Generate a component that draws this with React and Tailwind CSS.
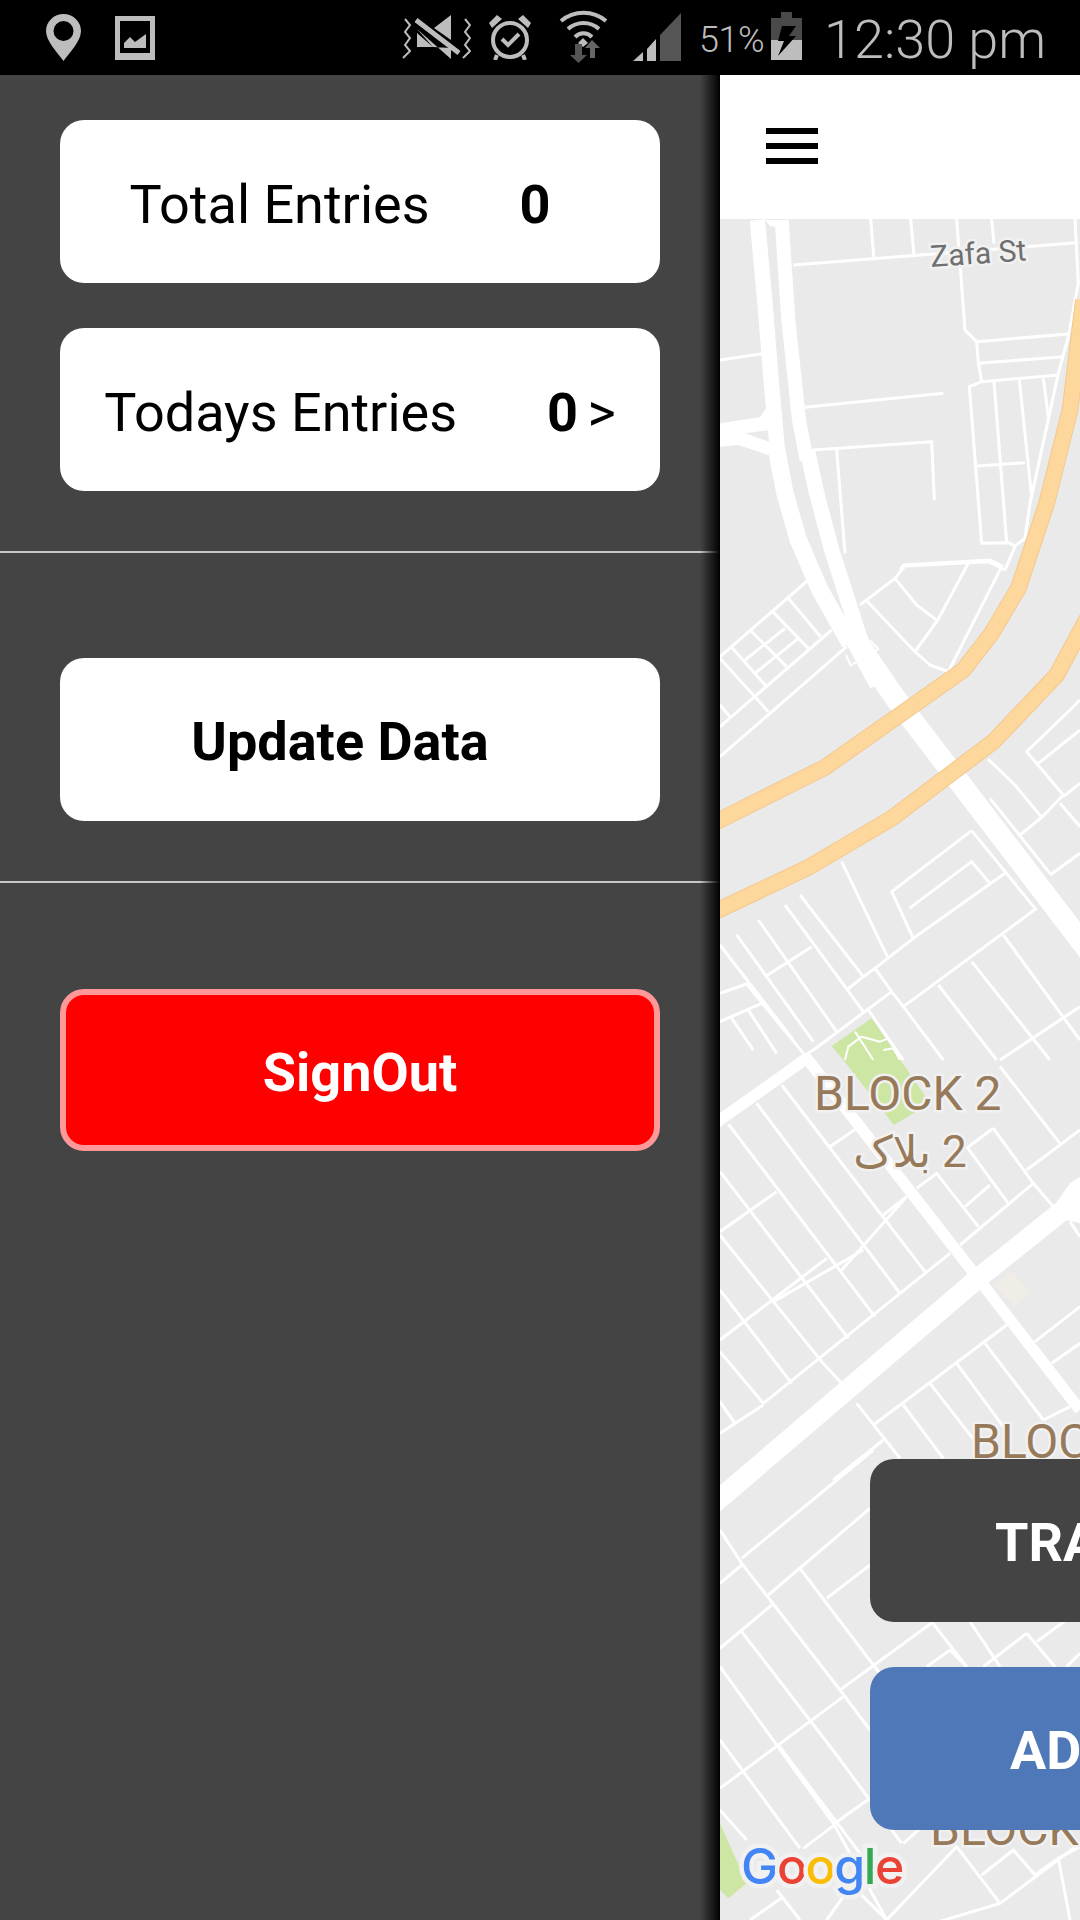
import { Fragment } from 'react';

// map strokes are traced per crop, each crop has its own origin and is 3x
const thinTop = [
  'M512 447L522 570', 'M632 447L642 555', 'M770 447L795 780L830 815L835 880L845 935L808 950L845 1420L925 1418L945 1428L975 1405L990 1300L1075 910',
  'M280 585L1130 518', 'M875 447L882 520', 'M1125 447L1135 640L1105 800L1075 910', 'M830 815L1105 792', 'M835 880L1090 860',
  'M845 935L1075 915', 'M882 935L920 1418', 'M958 930L995 1280', 'M1030 925L1045 1040', 'M832 1188L975 1178', 'M315 1012L730 970',
  'M60 870L195 850', 'M340 1140L695 1115L703 1290', 'M410 1140L435 1450', 'M600 1500L610 1485L870 1470L910 1490', 'M945 1430L915 1500',
];

const thinMid = [
  'M60 290L325 60', 'M60 500L395 210', 'M60 590L440 260', 'M480 135L585 55L615 18L865 5L915 30', 'M585 55L650 135L712 182',
  'M500 122L645 275L690 315L745 335L905 20', 'M712 182L645 275', 'M805 10L712 182', 'M95 262L200 380', 'M150 210L260 320',
  'M218 155L325 265', 'M265 115L362 230', 'M135 300L255 205', 'M165 340L295 235', 'M60 295L205 455', 'M60 435L90 470',
  'M1140 420L1110 450L980 575L1090 705', 'M1015 610L1140 510', 'M1090 705L1025 772L960 825', 'M1080 730L1140 800', 'M1140 670L1090 710',
  'M865 598L945 675L1025 772', 'M870 715L1050 940', 'M1050 945L1140 880', 'M425 905L562 1190', 'M815 812L575 995L640 1135', 'M815 812L1005 1045',
  'M628 1045L815 905L868 968', 'M915 940L640 1135L525 1225L490 1250L440 1290', 'M1010 1045L610 1340', 'M300 1005L490 1250', 'M255 1035L490 1355',
  'M175 1080L410 1415', 'M110 1125L340 1445', 'M335 1160L195 1250', 'M525 1225L575 1295L610 1340L730 1500', 'M575 1295L340 1470L290 1500',
  'M60 1155L280 1440', 'M60 1300L140 1272L310 1480', 'M60 1385L185 1330', 'M145 1350L230 1480', 'M95 1375L160 1470', 'M715 1275L890 1500',
  'M815 1205L1050 1500', 'M910 1125L1140 1440', 'M1140 1340L900 1500', 'M505 1350L610 1500',
];

const thinLow = [
  'M85 222L525 800', 'M170 160L600 730', 'M245 105L675 665', 'M60 365L445 865', 'M60 555L365 935L430 1005', 'M60 720L275 1000', 'M60 905L190 1060',
  'M60 1055L105 1120', 'M60 545L230 425', 'M60 870L380 625', 'M190 1060L600 730L750 610', 'M60 1150L190 1065', 'M220 755L490 600', 'M425 660L620 440',
  'M390 290L470 235', 'M550 495L620 440', 'M650 415L710 370L835 530', 'M780 585L1000 400L1060 470', 'M795 470L870 405', 'M880 235L805 290',
  'M800 290L925 460', 'M980 360L1140 240', 'M900 50L1080 280', 'M1000 400L880 235', 'M1005 875L1140 770', 'M1055 940L1140 880', 'M1110 515L1140 560',
  'M470 1060L600 1225', 'M520 1125L920 825', 'M610 1065L730 1225', 'M690 1000L830 1180', 'M770 940L910 1130', 'M855 880L1030 1110', 'M1030 1110L1110 1070',
  'M400 1290L550 1170',
];

const thinBottom = [
  'M60 240L125 340L420 720L510 840', 'M125 325L520 0', 'M60 400L125 345', 'M205 435L510 175', 'M300 355L520 645L610 760', 'M380 445L510 345', 'M420 720L700 515',
  'M60 595L215 465', 'M125 545L410 915L605 1180', 'M60 650L400 1120L560 1410', 'M60 870L300 1195', 'M60 1015L430 740', 'M60 1080L140 1170', 'M235 885L510 1250',
  'M405 1120L510 1045', 'M310 1195L410 1120', 'M610 1180L700 1100', 'M560 1410L770 1190L900 1360L1140 1180', 'M845 1275L940 1200L1005 1275L1075 1225L1140 1190',
  'M1075 1225L1110 1410', 'M900 1360L700 1420', 'M680 650L750 600L800 650', 'M695 515L800 650', 'M810 515L900 650', 'M850 650L980 550', 'M980 550L1065 650',
  'M1010 575L1140 480', 'M1100 650L1140 610', 'M380 1410L430 1340', 'M150 1410L250 1340', 'M230 1320L300 1410', 'M480 1330L560 1410',
];

const Crop = ({ x = 700, y, children }) => (
  <g transform={`translate(${x} ${y}) scale(0.33333)`} fill="none" strokeLinejoin="round">
    {children}
  </g>
);

const Lines = ({ list, width = 9 }) => (
  <Fragment>
    {list.map((d) => (
      <path key={d} d={d} stroke="#fff" strokeWidth={width} />
    ))}
  </Fragment>
);

const Highway = ({ d }) => (
  <Fragment>
    <path d={d} stroke="#f3c88f" strokeWidth="50" />
    <path d={d} stroke="#fdd79c" strokeWidth="44" />
  </Fragment>
);

const Map = () => (
  <svg className="block w-full h-full" viewBox="720 219 360 1701">
    <rect x="720" y="219" width="360" height="1701" fill="#eaeaea" />
    <Crop y={560}>
      <path d="M395 1458L515 1375L690 1630L582 1695L430 1500Z" fill="#cde6a3" />
      <path d="M435 1500L445 1460L485 1430L540 1445L565 1435M550 1470L580 1465L600 1500M465 1415L520 1500" stroke="#fff" strokeWidth="6" />
    </Crop>
    <Crop y={1450}>
      <path d="M60 1120L140 1300L85 1345L60 1320Z" fill="#cde6a3" />
    </Crop>
    <Crop y={1050}>
      <path d="M880 705L935 665L990 725L945 770Z" fill="#f0ece6" />
    </Crop>
    <Crop y={70}>
      <Lines list={thinTop} />
      <path d="M60 1060L180 1042L205 1005L240 1100L205 1155L115 1125L60 1130Z" fill="#fff" />
      <path d="M135 1090L210 1080L215 1118Z" fill="#eaeaea" />
    </Crop>
    <Crop x={720} y={220}>
      <path d="M112 0L135 250L155 500L175 720" stroke="#fff" strokeWidth="46" />
      <path d="M185 0L205 300L237 600L260 720" stroke="#fff" strokeWidth="42" />
      <path d="M135 0H205L165 20L150 18Z" fill="#fff" />
    </Crop>
    <Crop x={720} y={450}>
      <path d="M170 0L195 130L235 270L300 420L390 580" stroke="#fff" strokeWidth="52" />
      <path d="M262 0L290 130L335 300L380 440L425 580" stroke="#fff" strokeWidth="46" />
      <path d="M395 540L480 700" stroke="#fff" strokeWidth="66" />
      <path d="M378 615L392 646L475 597L450 572" stroke="#fff" strokeWidth="6" />
    </Crop>
    <Crop y={560}>
      <Lines list={thinMid} />
      <path d="M480 260L590 420L1200 1218" stroke="#fff" strokeWidth="64" />
    </Crop>
    <Crop y={1050}>
      <Lines list={thinLow} />
      <path d="M0 253L60 210L320 25L830 680L1140 1080" stroke="#fff" strokeWidth="34" />
      <path d="M0 1396L840 680L1200 392" stroke="#fff" strokeWidth="60" />
      <path d="M1060 470L1110 400L1140 380V520L1100 510Z" fill="#fff" />
    </Crop>
    <Crop y={1450}>
      <Lines list={thinBottom} />
    </Crop>
    <Crop y={560}>
      <Highway d="M0 810L375 622L620 450L790 330L875 220L955 85L1040 -170L1110 -450L1150 -780" />
      <Highway d="M0 1076L320 925L575 775L880 545L1070 345L1180 140" />
    </Crop>

    <g fill="#977a5a" stroke="#f1f1f1" strokeWidth="5" paintOrder="stroke" fontSize="48">
      <text x="814" y="1110">BLOCK 2</text>
      <text x="910" y="1167" textAnchor="middle" direction="rtl" className="font-['Roboto','DejaVu_Sans',sans-serif]" fontSize="44">2 بلاک</text>
      <text x="971" y="1458">BLOCK</text>
      <text x="930" y="1845">BLOCK</text>
    </g>
    <text x="931" y="267" transform="rotate(-4 931 267)" fill="#6f6f6f" stroke="#f1f1f1" strokeWidth="5" paintOrder="stroke" fontSize="30">Zafa St</text>

    <text x="741" y="1884" stroke="#f1f1f1" strokeWidth="9" paintOrder="stroke" fontSize="50" letterSpacing="-1.5" fontWeight="500" className="font-['Inter',sans-serif]">
      <tspan fill="#4285f4">G</tspan>
      <tspan fill="#ea4335">o</tspan>
      <tspan fill="#fbbc05">o</tspan>
      <tspan fill="#4285f4">g</tspan>
      <tspan fill="#34a853">l</tspan>
      <tspan fill="#ea4335">e</tspan>
    </text>
  </svg>
);

const StatusBar = () => (
  <div className="flex items-start h-[75px] bg-black text-[#bdbdbd] shrink-0">
    <svg className="ml-[46px] mt-[14px]" width="35" height="47" viewBox="0 0 35 47">
      <path fillRule="evenodd" fill="#bdbdbd" d="M17.5 0C27 0 35 7.500 35 17C35 27 24 38 17.500 47C11 38 0 27 0 17C0 7.500 8 0 17.500 0ZM17.500 7A10 10 0 1 0 17.500 27A10 10 0 1 0 17.500 7Z" />
    </svg>
    <svg className="ml-[34px] mt-[16px]" width="40" height="44" viewBox="0 0 40 44">
      <path fillRule="evenodd" fill="#bdbdbd" d="M0 0H40V44H0ZM5 5V37H35V5Z" />
      <path fill="#bdbdbd" d="M9 32V27L15 21L20 26L31 18V32Z" />
    </svg>
    <svg className="ml-[247px] mt-[15px]" width="69" height="44" viewBox="0 0 69 44" fill="none">
      <path d="M3 4L8 10L3 17L8 23L3 30L8 36L1 43M63 4L68 10L63 17L68 23L63 30L68 36L61 43" stroke="#bdbdbd" strokeWidth="2" />
      <path fill="#bdbdbd" d="M32 13L49 0V25ZM15 14L49 44V33L31 32L15 18V32H31Z" />
      <path d="M14 5L57 38" stroke="#bdbdbd" strokeWidth="5" />
    </svg>
    <svg className="ml-[17px] mt-[14px]" width="44" height="46" viewBox="0 0 44 46" fill="none">
      <circle cx="22" cy="26" r="17" stroke="#bdbdbd" strokeWidth="4" />
      <path d="M14 25L20 31L31 20" stroke="#bdbdbd" strokeWidth="4" />
      <path d="M1 9L9 1L14 5L4 14ZM43 9L35 1L30 5L40 14Z" fill="#bdbdbd" />
      <path d="M9 41L7 46M35 41L37 46" stroke="#bdbdbd" strokeWidth="4" />
    </svg>
    <svg className="ml-[27px] mt-[10px]" width="49" height="53" viewBox="0 0 49 53" fill="none">
      <path d="M2 11C15 0 34 0 47 11M9 19C18 11 31 11 40 19M16 27C21 22 28 22 33 27" stroke="#bdbdbd" strokeWidth="4" />
      <path d="M24 28L29 33L24 37L19 33Z" fill="#bdbdbd" />
      <path d="M16 34H23V45H28L19.500 53L11 45H16Z" fill="#555" />
      <path d="M31 48V38H26L33 30L41 38H36V48Z" fill="#666" />
    </svg>
    <svg className="ml-[25px] mt-[13px]" width="48" height="48" viewBox="0 0 48 48">
      <path d="M0 48L10 39V48Z" fill="#bdbdbd" />
      <path d="M14 36L23 26V48H14Z" fill="#bdbdbd" />
      <path d="M27 22L48 0V48H27Z" fill="#555" />
    </svg>
    <span className="ml-[18px] mt-[19px] text-[36px] leading-[42px] font-light tracking-[-0.5px]">51%</span>
    <svg className="ml-[7px] mt-[12px]" width="31" height="48" viewBox="0 0 31 48">
      <path d="M10 0H21V6H31V28H0V6H10Z" fill="#4a4a4a" />
      <path d="M0 28H31V48H0Z" fill="#bdbdbd" />
      <path d="M11 14H25L18 24H25L7 44L13 29H7Z" fill="#000" />
    </svg>
    <span className="ml-[22px] mt-[8px] text-[54px] leading-[63px] font-light whitespace-nowrap">12:30 pm</span>
  </div>
);

const Card = ({ className, children }) => (
  <div className={`flex items-center justify-center h-[163px] rounded-[24px] bg-white text-black text-[54px] ${className}`}>
    {children}
  </div>
);

const Drawer = () => (
  <aside className="relative w-[720px] shrink-0 bg-[#444444]">
    <div className="px-[60px] pt-[45px] pb-[60px] flex flex-col gap-[45px]">
      <Card className="gap-[90px] pr-[40px] pt-[5px]">
        <span>Total Entries</span>
        <span className="font-bold">0</span>
      </Card>
      <Card className="gap-[90px] pt-[5px]">
        <span>Todays Entries</span>
        <span className="font-bold [word-spacing:-4px]">0 <span className="font-normal">&gt;</span></span>
      </Card>
    </div>
    <div className="h-[2px] bg-[#c8c8c8]" />
    <div className="px-[60px] pt-[105px] pb-[60px]">
      <Card className="pr-[40px] pt-[4px] font-bold">Update Data</Card>
    </div>
    <div className="h-[2px] bg-[#c8c8c8]" />
    <div className="px-[60px] pt-[106px]">
      <div className="flex items-center justify-center h-[162px] pt-[4px] rounded-[24px] bg-[#ff0000] border-[6px] border-[#ff9999] text-white text-[54px] font-bold">
        SignOut
      </div>
    </div>
    <div className="absolute top-0 bottom-0 right-0 w-[20px] bg-gradient-to-r from-transparent to-black" />
  </aside>
);

const App = () => (
  <div className="flex flex-col w-[1080px] h-[1920px] overflow-hidden font-['Roboto',sans-serif]">
    <StatusBar />
    <div className="flex flex-1 min-h-0">
      <Drawer />
      <main className="flex flex-col flex-1 min-w-0 bg-white">
        <div className="flex flex-col justify-center gap-[9px] h-[144px] pl-[46px] pb-[2px] shrink-0">
          <div className="w-[52px] h-[6px] bg-black" />
          <div className="w-[52px] h-[6px] bg-black" />
          <div className="w-[52px] h-[6px] bg-black" />
        </div>
        <div className="relative flex-1 min-h-0 overflow-hidden">
          <Map />
          <div className="absolute left-[150px] top-[1240px] w-[600px] h-[163px] rounded-[24px] bg-[#444444] text-white text-[54px] font-bold flex items-center pl-[125px] pt-[4px]">
            TRA
          </div>
          <div className="absolute left-[150px] top-[1448px] w-[600px] h-[163px] rounded-[24px] bg-[#4e78b8] text-white text-[54px] font-bold flex items-center pl-[140px] pt-[4px]">
            AD
          </div>
        </div>
      </main>
    </div>
  </div>
);

export default App;
